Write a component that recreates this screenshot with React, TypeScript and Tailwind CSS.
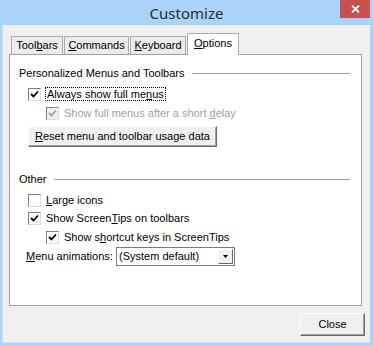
import React from 'react';

const font = { fontFamily: '"Liberation Sans", Arial, sans-serif' };

const Check: React.FC<{ checked?: boolean; disabled?: boolean }> = ({ checked, disabled }) => (
  <div
    className={`w-[13px] h-[13px] shrink-0 border border-t-[#808080] border-l-[#808080] border-b-[#dcdcdc] border-r-[#dcdcdc] flex items-center justify-center ${
      disabled ? 'bg-[#f0f0f0]' : 'bg-white'
    }`}
  >
    {checked && (
      <svg width="9" height="9" viewBox="0 0 9 9">
        <path d="M1 4 L3.5 6.5 L8 1.5" fill="none" stroke={disabled ? '#a0a0a0' : '#000'} strokeWidth="1.8" />
      </svg>
    )}
  </div>
);

const Header: React.FC<{ label: string }> = ({ label }) => (
  <div className="flex items-center h-[13px]">
    <span className="whitespace-nowrap">{label}</span>
    <div className="flex-1 ml-[7px] border-t border-[#a0a0a0]" />
  </div>
);

const tabs = [
  { w: 'w-[52px]', label: <>Tool<u>b</u>ars</> },
  { w: 'w-[65px]', label: <><u>C</u>ommands</> },
  { w: 'w-[56px]', label: <><u>K</u>eyboard</> },
];

export default function App() {
  return (
    <div className="w-[373px] h-[346px] bg-[#aad3fa] flex flex-col text-[11px] text-black" style={font}>
      <div className="relative h-[25px] flex items-center justify-center">
        <span className="text-[15px] text-[#2c2c2c] pt-[1px]" style={{ fontFamily: '"Noto Sans", sans-serif' }}>
          Customize
        </span>
        <div className="absolute right-[3px] top-0 w-[30px] h-[18px] bg-[#c75050] flex items-center justify-center">
          <svg width="9" height="8" viewBox="0 0 9 8">
            <path d="M1 0.5 L8 7.5 M8 0.5 L1 7.5" stroke="#fff" strokeWidth="1.8" />
          </svg>
        </div>
      </div>

      <div className="ml-[2px] w-[368px] h-[318px] bg-[#f0f0f0] border-l border-b border-[#d6dde4] pt-[8px] px-[6px] flex flex-col">
        <div className="flex items-end h-[21px] pl-[2px] gap-[1px]">
          {tabs.map((t, i) => (
            <div
              key={i}
              className={`${t.w} h-[18px] bg-[#ebebeb] border border-b-0 border-[#acacac] flex items-center justify-center`}
            >
              {t.label}
            </div>
          ))}
          <div className="relative z-10 w-[52px] h-[22px] -mb-[1px] bg-white border border-b-0 border-[#acacac] flex items-center justify-center pb-[2px]">
            <u>O</u>ptions
          </div>
        </div>

        <div className="w-[353px] h-[252px] bg-white border border-[#a0a0a0] pt-[12px] pl-[9px] pr-[11px] flex flex-col">
          <Header label="Personalized Menus and Toolbars" />
          <div className="mt-[5px] h-[18px] flex items-center pl-[9px]">
            <Check checked />
            <span className="ml-[4px] px-[1px] h-[14px] leading-[12px] border border-dotted border-black">
              Always show full me<u>n</u>us
            </span>
          </div>
          <div className="mt-[1px] h-[18px] flex items-center pl-[27px] text-[#a0a0a0]">
            <Check checked disabled />
            <span className="ml-[5px]">
              Show full menus after a short <u>d</u>elay
            </span>
          </div>
          <div className="mt-[4px] ml-[9px] w-[189px] h-[21px] bg-[#f0f0f0] border border-t-white border-l-white border-b-[#696969] border-r-[#696969] shadow-[inset_-1px_-1px_0_#a0a0a0] flex items-center justify-center">
            <span>
              <u>R</u>eset menu and toolbar usage data
            </span>
          </div>

          <div className="mt-[26px]">
            <Header label="Other" />
          </div>
          <div className="mt-[5px] h-[18px] flex items-center pl-[9px]">
            <Check />
            <span className="ml-[5px]">
              <u>L</u>arge icons
            </span>
          </div>
          <div className="h-[18px] flex items-center pl-[9px]">
            <Check checked />
            <span className="ml-[5px]">
              Show Screen<u>T</u>ips on toolbars
            </span>
          </div>
          <div className="mt-[1px] h-[18px] flex items-center pl-[27px]">
            <Check checked />
            <span className="ml-[5px]">
              Show s<u>h</u>ortcut keys in ScreenTips
            </span>
          </div>
          <div className="h-[20px] flex items-center pl-[7px]">
            <span className="w-[90px]">
              <u>M</u>enu animations:
            </span>
            <div className="w-[119px] h-[19px] bg-white border border-[#7a7a7a] flex items-center">
              <span className="flex-1 pl-[2px]">(System default)</span>
              <div className="w-[15px] h-[15px] mr-[1px] bg-[#f0f0f0] border border-t-white border-l-white border-b-[#696969] border-r-[#696969] flex items-center justify-center">
                <svg width="5" height="3" viewBox="0 0 5 3">
                  <path d="M0 0 H5 L2.5 3 Z" fill="#000" />
                </svg>
              </div>
            </div>
          </div>
        </div>

        <div className="flex justify-end mt-[7px] pr-[-1px]">
          <div className="w-[65px] h-[23px] mr-[-1px] bg-[#f0f0f0] border border-t-white border-l-white border-b-[#696969] border-r-[#696969] shadow-[inset_-1px_-1px_0_#a0a0a0] flex items-center justify-center">
            Close
          </div>
        </div>
      </div>
    </div>
  );
}
